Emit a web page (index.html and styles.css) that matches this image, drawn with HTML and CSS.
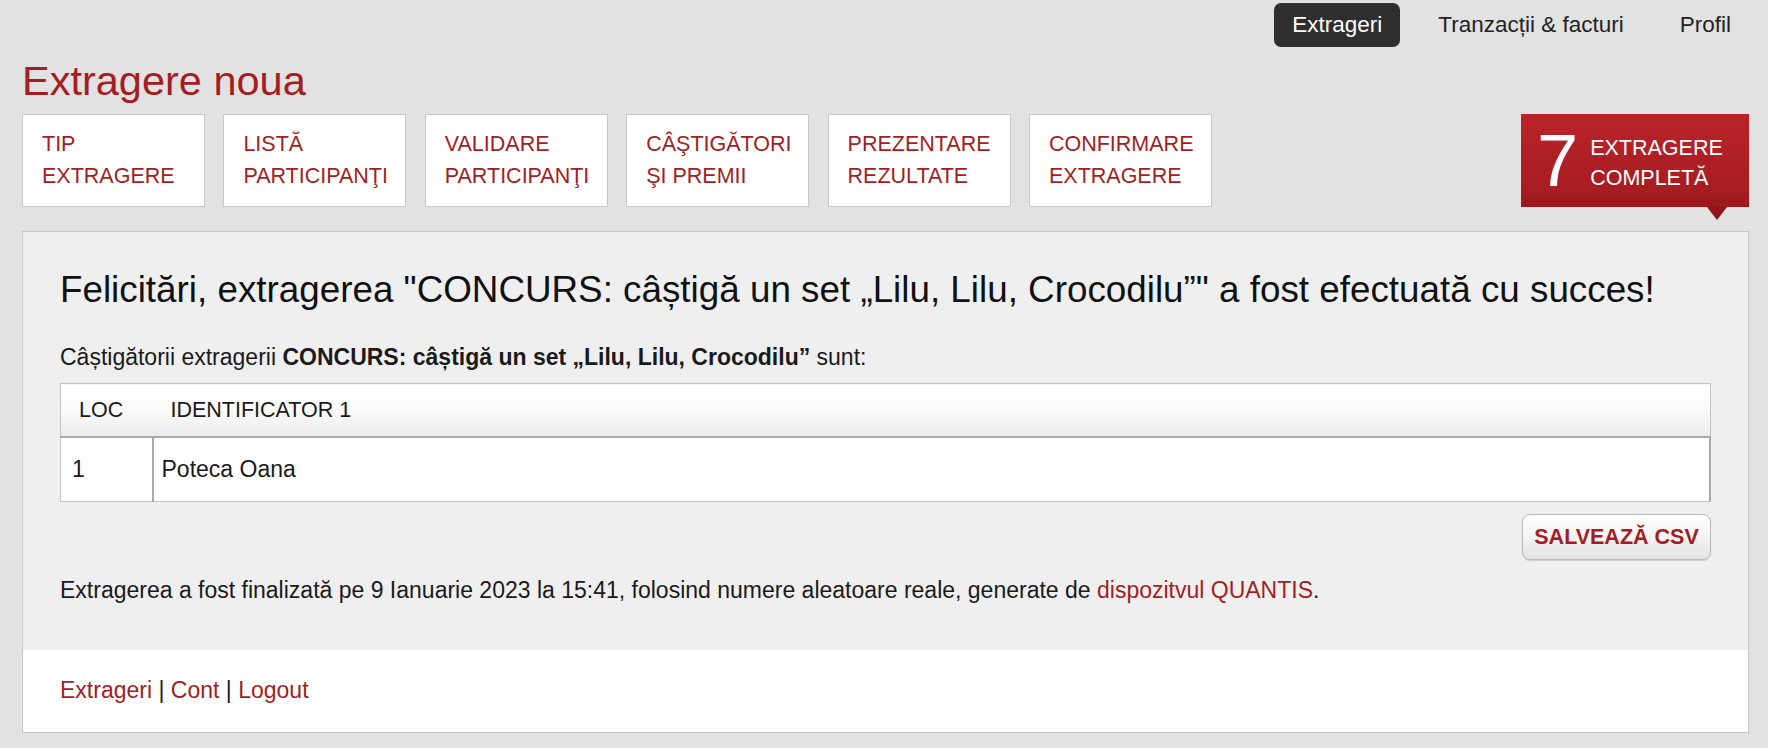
FILE: index.html
```html
<!DOCTYPE html>
<html lang="ro">
<head>
<meta charset="utf-8">
<title>Extragere noua</title>
<link rel="stylesheet" href="styles.css">
</head>
<body>
<div class="page">
  <nav class="topnav">
    <a class="nav-item active" href="#">Extrageri</a>
    <a class="nav-item" href="#">Tranzacții &amp; facturi</a>
    <a class="nav-item" href="#">Profil</a>
  </nav>

  <h1 class="title">Extragere noua</h1>

  <div class="steps">
    <div class="step">TIP<br>EXTRAGERE</div>
    <div class="step">LISTĂ<br>PARTICIPANŢI</div>
    <div class="step">VALIDARE<br>PARTICIPANŢI</div>
    <div class="step">CÂŞTIGĂTORI<br>ŞI PREMII</div>
    <div class="step">PREZENTARE<br>REZULTATE</div>
    <div class="step">CONFIRMARE<br>EXTRAGERE</div>
    <div class="badge">
      <span class="badge-num">7</span>
      <span class="badge-text">EXTRAGERE<br>COMPLETĂ</span>
    </div>
  </div>

  <div class="panel">
    <div class="panel-body">
      <h2 class="headline">Felicitări, extragerea "CONCURS: câștigă un set „Lilu, Lilu, Crocodilu”" a fost efectuată cu succes!</h2>
      <p class="lead">Câștigătorii extragerii <strong>CONCURS: câștigă un set „Lilu, Lilu, Crocodilu”</strong> sunt:</p>
      <table class="results">
        <thead>
          <tr><th class="col-loc">LOC</th><th>IDENTIFICATOR 1</th></tr>
        </thead>
        <tbody>
          <tr><td class="cell-loc">1</td><td class="cell-id">Poteca Oana</td></tr>
        </tbody>
      </table>
      <div class="actions">
        <button class="btn-csv" type="button">SALVEAZĂ CSV</button>
      </div>
      <p class="note">Extragerea a fost finalizată pe 9 Ianuarie 2023 la 15:41, folosind numere aleatoare reale, generate de <a href="#">dispozitvul QUANTIS</a>.</p>
    </div>
    <div class="panel-footer">
      <a href="#">Extrageri</a> | <a href="#">Cont</a> | <a href="#">Logout</a>
    </div>
  </div>
</div>
</body>
</html>
```

FILE: styles.css
```css
html, body {
  margin: 0;
  padding: 0;
}

body {
  background: #e2e2e2;
  font-family: "Liberation Sans", Arial, Helvetica, sans-serif;
  color: #1a1a1a;
}

.page {
  width: 1727px;
  margin-left: 22px;
}

a {
  color: #a51d22;
  text-decoration: none;
}

/* top navigation */
.topnav {
  display: flex;
  justify-content: flex-end;
  gap: 20px;
  padding-top: 3px;
}

.nav-item {
  display: block;
  padding: 9px 18px;
  font-size: 22.5px;
  line-height: 26px;
  color: #222;
  border-radius: 7px;
}

.nav-item.active {
  background: #2f2f2f;
  color: #fff;
}

/* title */
.title {
  margin: 9px 0 9px 0;
  font-size: 41.5px;
  line-height: 49px;
  font-weight: normal;
  color: #a51d22;
}

/* steps */
.steps {
  display: flex;
  gap: 18.4px;
  height: 93px;
}

.step {
  box-sizing: border-box;
  width: 183px;
  height: 93px;
  padding: 13px 0 0 19px;
  background: #fff;
  border: 1px solid #c9c9c9;
  font-size: 21.5px;
  line-height: 32px;
  color: #a51d22;
}

.badge {
  position: relative;
  box-sizing: border-box;
  margin-left: auto;
  width: 228px;
  height: 93px;
  padding-left: 16px;
  display: flex;
  align-items: center;
  gap: 12px;
  background: linear-gradient(#ba242a, #a71d22 80%, #9a181c);
  color: #fff;
}

.badge::after {
  content: "";
  position: absolute;
  right: 22px;
  bottom: -13px;
  border-left: 10px solid transparent;
  border-right: 10px solid transparent;
  border-top: 13px solid #8e1519;
}

.badge-num {
  font-size: 74px;
  line-height: 74px;
}

.badge-text {
  font-size: 21.5px;
  line-height: 30px;
  padding-top: 4px;
}

/* panel */
.panel {
  margin-top: 24px;
  border: 1px solid #c6c6c6;
  background: #efefef;
}

.panel-body {
  padding: 36px 37px 45px;
}

.headline {
  margin: 0;
  font-size: 36.8px;
  line-height: 44px;
  font-weight: normal;
  color: #111;
}

.lead {
  margin: 30px 0 11px;
  font-size: 23px;
  line-height: 30px;
}

.results {
  width: 100%;
  border-collapse: collapse;
  border: 1px solid #c4c4c4;
}

.results th {
  height: 52px;
  padding: 0 18px;
  text-align: left;
  font-size: 21.5px;
  font-weight: normal;
  color: #1a1a1a;
  background: linear-gradient(#ffffff, #fafafa 50%, #ececec);
  border-bottom: 2px solid #a9a9a9;
}

.results th.col-loc {
  width: 92px;
  box-sizing: border-box;
}

.results td {
  height: 63px;
  font-size: 23px;
  background: #fff;
  color: #1a1a1a;
}

.results td.cell-loc {
  padding: 0 0 0 11px;
}

.results td.cell-id {
  padding: 0 0 0 8px;
  border-left: 2px solid #a9a9a9;
  border-right: 2px solid #a9a9a9;
}

.actions {
  display: flex;
  justify-content: flex-end;
  margin-top: 12px;
}

.btn-csv {
  width: 189px;
  height: 46px;
  padding: 0;
  border: 1px solid #b9b9b9;
  border-radius: 8px;
  background: linear-gradient(#ffffff, #f4f4f4 50%, #e2e2e2);
  box-shadow: 0 1px 1px rgba(0, 0, 0, 0.15);
  font-family: "Liberation Sans", Arial, Helvetica, sans-serif;
  font-size: 21.5px;
  font-weight: bold;
  color: #a51d22;
}

.note {
  margin: 15px 0 0;
  font-size: 23px;
  line-height: 30px;
}

.panel-footer {
  background: #fff;
  padding: 25px 37px 27px;
  font-size: 23px;
  line-height: 30px;
  color: #1a1a1a;
}
```
